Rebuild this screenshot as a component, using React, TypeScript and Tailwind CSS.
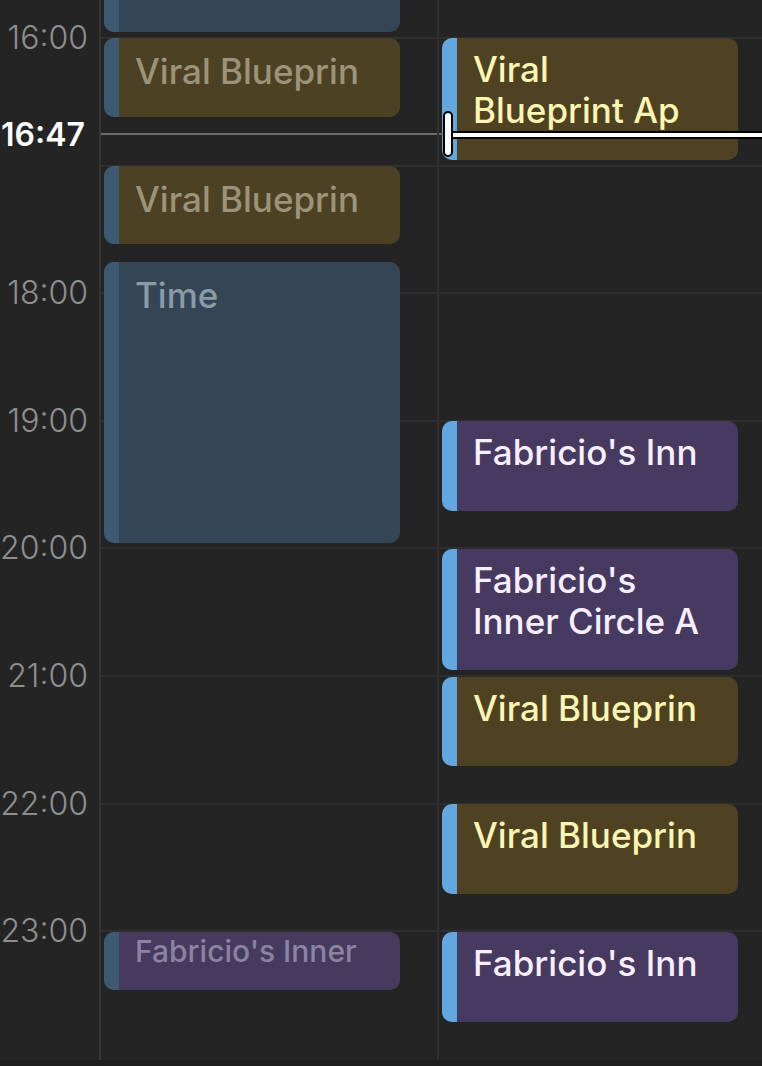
import React from "react";

type Tone = "olive" | "blue" | "purple";

type CalEvent = {
  top: number;
  bottom: number;
  lines: string[];
  tone: Tone;
  small?: boolean;
};

const HOUR = 127.6;
const FIRST_LINE = 38; // y of 16:00

const hours = [16, 17, 18, 19, 20, 21, 22, 23];

const pastEvents: CalEvent[] = [
  { top: -60, bottom: 32, lines: [""], tone: "blue" },
  { top: 38, bottom: 117, lines: ["Viral Blueprin"], tone: "olive" },
  { top: 166, bottom: 244, lines: ["Viral Blueprin"], tone: "olive" },
  { top: 262, bottom: 543, lines: ["Time"], tone: "blue" },
  { top: 932, bottom: 990, lines: ["Fabricio's Inner"], tone: "purple", small: true },
];

const upcomingEvents: CalEvent[] = [
  { top: 38, bottom: 160, lines: ["Viral", "Blueprint Ap"], tone: "olive" },
  { top: 421, bottom: 511, lines: ["Fabricio's Inn"], tone: "purple" },
  { top: 549, bottom: 670, lines: ["Fabricio's", "Inner Circle A"], tone: "purple" },
  { top: 677, bottom: 766, lines: ["Viral Blueprin"], tone: "olive" },
  { top: 804, bottom: 894, lines: ["Viral Blueprin"], tone: "olive" },
  { top: 932, bottom: 1022, lines: ["Fabricio's Inn"], tone: "purple" },
];

const pastBg: Record<Tone, string> = {
  olive: "bg-[#4d4123] text-[#9b9479]",
  blue: "bg-[#344656] text-[#8a9aa7]",
  purple: "bg-[#463a5e] text-[#8c82a2]",
};

const upcomingBg: Record<Tone, string> = {
  olive: "bg-[#4e4222] text-[#fdf5b3]",
  blue: "bg-[#344656] text-[#eaf2fa]",
  purple: "bg-[#473a60] text-[#f7efff]",
};

function EventBlock({ ev, past }: { ev: CalEvent; past: boolean }) {
  const tone = past ? pastBg[ev.tone] : upcomingBg[ev.tone];
  return (
    <div
      className={`absolute left-[3px] w-[296px] flex overflow-hidden rounded-[10px] ${tone}`}
      style={{ top: ev.top, height: ev.bottom - ev.top }}
    >
      <div className={`w-[15px] shrink-0 ${past ? "bg-[#3e5a73]" : "bg-[#63a7df]"}`} />
      <div
        className={`flex-1 overflow-hidden pl-[16px] font-medium ${
          ev.small
            ? "pt-[2px] text-[30px] leading-[34px]"
            : past
              ? "pt-[13px] text-[35px] leading-[41px]"
              : "pt-[11px] text-[35px] leading-[41px]"
        }`}
      >
        {ev.lines.map((l, i) => (
          <div key={i} className="whitespace-nowrap overflow-hidden">
            {l}
          </div>
        ))}
      </div>
    </div>
  );
}

function HourLines() {
  return (
    <>
      {hours.map((h, i) => (
        <div
          key={h}
          className="absolute left-0 right-0 h-[2px] bg-[#2e2e2e]"
          style={{ top: FIRST_LINE + i * HOUR - 1 }}
        />
      ))}
    </>
  );
}

export default function App() {
  return (
    <div
      className="w-[762px] h-[1066px] bg-[#242424] overflow-hidden flex flex-col"
      style={{ fontFamily: "Inter, 'Noto Sans', sans-serif" }}
    >
      <div className="relative flex flex-1">
        {/* time gutter */}
        <div className="relative w-[99px] shrink-0">
          {hours
            .filter((h) => h !== 17)
            .map((h) => (
              <div
                key={h}
                className="absolute right-[11px] -translate-y-1/2 text-[32px] leading-none font-light text-[#8e8e8e]"
                style={{ top: FIRST_LINE + (h - 16) * HOUR }}
              >
                {h}:00
              </div>
            ))}
          <div className="absolute left-[1px] top-[135px] -translate-y-1/2 text-[32px] leading-none font-semibold text-white">
            16:47
          </div>
        </div>
        <div className="w-[2px] bg-[#363636]" />

        {/* past column */}
        <div className="relative w-[336px] shrink-0">
          <HourLines />
          {pastEvents.map((ev, i) => (
            <EventBlock key={i} ev={ev} past />
          ))}
          <div className="absolute left-0 right-0 top-[133px] h-[2px] bg-[#6c6c6c]" />
        </div>
        <div className="w-[2px] bg-[#2f2f2f]" />

        {/* today column */}
        <div className="relative flex-1">
          <HourLines />
          {upcomingEvents.map((ev, i) => (
            <EventBlock key={i} ev={ev} past={false} />
          ))}
          <div className="absolute left-0 w-[6px] top-[133px] h-[2px] bg-[#6c6c6c]" />
          <div className="absolute left-[10px] right-0 top-[131px] h-[8px] bg-white border-y-2 border-black" />
          <div className="absolute left-[4px] top-[111px] w-[10px] h-[46px] rounded-full bg-white border-2 border-black" />
        </div>
      </div>
      <div className="h-[6px] bg-[#1f1f1f]" />
    </div>
  );
}
